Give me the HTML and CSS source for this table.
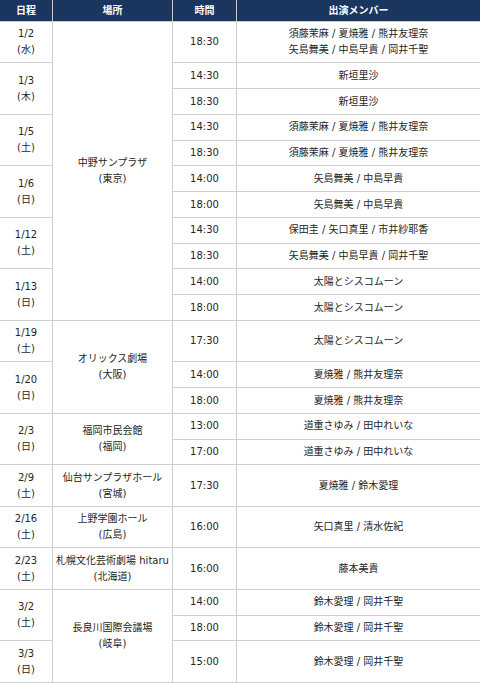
FILE: index.html
```html
<!DOCTYPE html>
<html lang="ja">
<head>
<meta charset="utf-8">
<title>公演スケジュール</title>
<link rel="stylesheet" href="styles.css">
</head>
<body>
<table class="schedule">
  <colgroup>
    <col class="c-date">
    <col class="c-venue">
    <col class="c-time">
    <col class="c-member">
  </colgroup>
  <thead>
    <tr><th>日程</th><th>場所</th><th>時間</th><th>出演メンバー</th></tr>
  </thead>
  <tbody>
    <tr><td>1/2<br>(水)</td><td rowspan="11">中野サンプラザ<br>(東京)</td><td>18:30</td><td>須藤茉麻 / 夏焼雅 / 熊井友理奈<br>矢島舞美 / 中島早貴 / 岡井千聖</td></tr>
    <tr><td rowspan="2">1/3<br>(木)</td><td>14:30</td><td>新垣里沙</td></tr>
    <tr><td>18:30</td><td>新垣里沙</td></tr>
    <tr><td rowspan="2">1/5<br>(土)</td><td>14:30</td><td>須藤茉麻 / 夏焼雅 / 熊井友理奈</td></tr>
    <tr><td>18:30</td><td>須藤茉麻 / 夏焼雅 / 熊井友理奈</td></tr>
    <tr><td rowspan="2">1/6<br>(日)</td><td>14:00</td><td>矢島舞美 / 中島早貴</td></tr>
    <tr><td>18:00</td><td>矢島舞美 / 中島早貴</td></tr>
    <tr><td rowspan="2">1/12<br>(土)</td><td>14:30</td><td>保田圭 / 矢口真里 / 市井紗耶香</td></tr>
    <tr><td>18:30</td><td>矢島舞美 / 中島早貴 / 岡井千聖</td></tr>
    <tr><td rowspan="2">1/13<br>(日)</td><td>14:00</td><td>太陽とシスコムーン</td></tr>
    <tr><td>18:00</td><td>太陽とシスコムーン</td></tr>
    <tr><td>1/19<br>(土)</td><td rowspan="3">オリックス劇場<br>(大阪)</td><td>17:30</td><td>太陽とシスコムーン</td></tr>
    <tr><td rowspan="2">1/20<br>(日)</td><td>14:00</td><td>夏焼雅 / 熊井友理奈</td></tr>
    <tr><td>18:00</td><td>夏焼雅 / 熊井友理奈</td></tr>
    <tr><td rowspan="2">2/3<br>(日)</td><td rowspan="2">福岡市民会館<br>(福岡)</td><td>13:00</td><td>道重さゆみ / 田中れいな</td></tr>
    <tr><td>17:00</td><td>道重さゆみ / 田中れいな</td></tr>
    <tr><td>2/9<br>(土)</td><td>仙台サンプラザホール<br>(宮城)</td><td>17:30</td><td>夏焼雅 / 鈴木愛理</td></tr>
    <tr><td>2/16<br>(土)</td><td>上野学園ホール<br>(広島)</td><td>16:00</td><td>矢口真里 / 清水佐紀</td></tr>
    <tr><td>2/23<br>(土)</td><td>札幌文化芸術劇場 hitaru<br>(北海道)</td><td>16:00</td><td>藤本美貴</td></tr>
    <tr><td rowspan="2">3/2<br>(土)</td><td rowspan="3">長良川国際会議場<br>(岐阜)</td><td>14:00</td><td>鈴木愛理 / 岡井千聖</td></tr>
    <tr><td>18:00</td><td>鈴木愛理 / 岡井千聖</td></tr>
    <tr><td>3/3<br>(日)</td><td>15:00</td><td>鈴木愛理 / 岡井千聖</td></tr>
  </tbody>
</table>
</body>
</html>
```
FILE: styles.css
```css
html, body {
  margin: 0;
  padding: 0;
  background: #ffffff;
}
.schedule {
  width: 480px;
  table-layout: fixed;
  border-collapse: collapse;
  font-family: "DejaVu Sans", "Noto Sans CJK JP", sans-serif;
  font-size: 10px;
  line-height: 15.75px;
  color: #262626;
}
.c-date { width: 52.5px; }
.c-venue { width: 120px; }
.c-time { width: 64px; }
.c-member { width: auto; }
.schedule th {
  background: #1b365e;
  color: #ffffff;
  font-weight: bold;
  padding: 2.6px 2px;
  text-align: center;
  vertical-align: middle;
  border: 1px solid #c8ccd2;
  border-top: none;
}
.schedule td {
  padding: 4.5px 2px;
  text-align: center;
  vertical-align: middle;
  border: 1px solid #cfcfcf;
  white-space: nowrap;
}
.schedule tr > *:first-child {
  border-left: none;
}
.schedule tr > *:last-child {
  border-right: none;
}
.schedule tbody tr td[rowspan="11"],
.schedule tbody tr td[rowspan="3"] {
  border-right: 1px solid #cfcfcf;
}
```
